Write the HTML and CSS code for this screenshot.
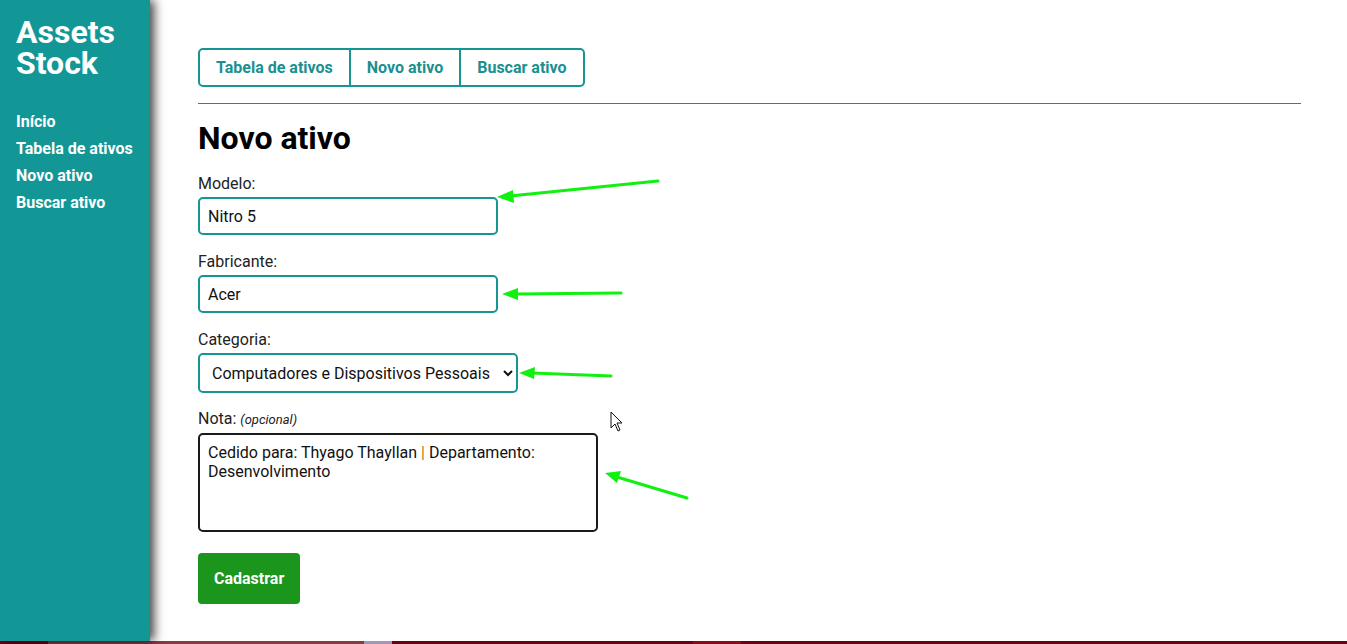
FILE: index.html
```html
<!DOCTYPE html>
<html>
<head>
    <title>Assets Stock</title>
    <link rel="stylesheet" href="styles.css">
</head>
<body>
    <div class="app">
        <aside class="sidebar">
            <h1>Assets Stock</h1>
            <nav class="side-links">
                <a href="#">Início</a>
                <a href="#">Tabela de ativos</a>
                <a href="#">Novo ativo</a>
                <a href="#">Buscar ativo</a>
            </nav>
        </aside>

        <main class="content">
            <div class="tabs">
                <a href="#" class="tab">Tabela de ativos</a>
                <a href="#" class="tab">Novo ativo</a>
                <a href="#" class="tab">Buscar ativo</a>
            </div>
            <hr class="divider">

            <h2 class="page-title">Novo ativo</h2>

            <form class="asset-form">
                <div class="field">
                    <label for="modelo">Modelo:</label>
                    <input type="text" id="modelo" class="text-input" value="Nitro 5">
                </div>
                <div class="field">
                    <label for="fabricante">Fabricante:</label>
                    <input type="text" id="fabricante" class="text-input" value="Acer">
                </div>
                <div class="field field-select">
                    <label for="categoria">Categoria:</label>
                    <select id="categoria" class="select-input">
                        <option>Computadores e Dispositivos Pessoais</option>
                        <option>Periféricos</option>
                        <option>Redes</option>
                    </select>
                </div>
                <div class="field">
                    <label for="nota">Nota: <em class="optional">(opcional)</em></label>
                    <div id="nota" class="note-box" contenteditable="true">Cedido para: Thyago Thayllan <span class="pipe">|</span> Departamento:<br>Desenvolvimento</div>
                </div>
                <button type="button" class="submit-button">Cadastrar</button>
            </form>
        </main>
    </div>

    <div class="taskbar">
        <span class="task task-active"></span>
        <span class="task task-icon"></span>
        <span class="task-gap"></span>
        <span class="task task-red"></span>
    </div>

    <!-- anotações do print -->
    <svg class="marks" width="1347" height="644" viewBox="0 0 1347 644">
        <g stroke="#12f012" stroke-width="3" stroke-linecap="round">
            <line x1="658" y1="181" x2="510" y2="196"/>
            <line x1="621" y1="293" x2="515" y2="294"/>
            <line x1="611" y1="376" x2="532" y2="373"/>
            <line x1="687" y1="498" x2="617" y2="477"/>
        </g>
        <g fill="#12f012">
            <polygon points="497,197 513,190 514,203"/>
            <polygon points="502,294 518,288 518,300"/>
            <polygon points="519,373 535,367 534,379"/>
            <polygon points="605,473 621,471 617,483"/>
        </g>
        <path d="M611 412 L611 428 L615 424 L618 431 L620 430 L617 423 L622 423 Z" fill="#fff" stroke="#111" stroke-width="1" stroke-linejoin="round"/>
    </svg>
</body>
</html>
```

FILE: styles.css
```css
body {
    margin: 0;
    font-family: Roboto, "Liberation Sans", Arial, sans-serif;
    background: #fff;
    color: #111;
    overflow: hidden;
}

.app {
    display: flex;
    height: 641px;
}

.sidebar {
    width: 150px;
    flex-shrink: 0;
    box-sizing: border-box;
    padding: 17px 0 0 16px;
    background: #139696;
    box-shadow: 4px 0 10px rgba(0, 0, 0, 0.75);
    position: relative;
    z-index: 1;
}

.sidebar h1 {
    margin: 0;
    width: 110px;
    font-size: 32px;
    line-height: 31px;
    font-weight: 700;
    color: #fff;
}

.side-links {
    display: flex;
    flex-direction: column;
    margin-top: 29px;
}

.side-links a {
    color: #fff;
    font-size: 16px;
    font-weight: 700;
    line-height: 27px;
    text-decoration: none;
}

.content {
    flex: 1;
    padding: 48px 46px 0 48px;
}

.tabs {
    display: inline-flex;
    border: 2px solid #179494;
    border-radius: 5px;
}

.tab {
    padding: 8px 16px;
    line-height: 19px;
    font-size: 16px;
    font-weight: 700;
    color: #1a9090;
    text-decoration: none;
}

.tab + .tab {
    border-left: 2px solid #179494;
}

.divider {
    margin: 16px 0 0;
    border: none;
    border-top: 1px solid #1a8c8c;
}

.page-title {
    margin: 16px 0 17px;
    font-size: 32px;
    line-height: 37px;
    font-weight: 700;
    color: #000;
}

.field {
    margin-bottom: 17px;
}

.field-select {
    margin-bottom: 16px;
}

.field label {
    display: block;
    margin-bottom: 4px;
    font-size: 16px;
    line-height: 19px;
    color: #222;
}

.optional {
    font-size: 13px;
    color: #222;
}

.text-input {
    box-sizing: border-box;
    width: 300px;
    height: 38px;
    padding: 0 8px;
    border: 2px solid #179494;
    border-radius: 5px;
    font-family: inherit;
    font-size: 16px;
    color: #111;
    outline: none;
}

.select-input {
    box-sizing: border-box;
    width: 320px;
    height: 40px;
    padding: 0 4px 0 8px;
    border: 2px solid #179494;
    border-radius: 5px;
    background: #fff;
    font-family: inherit;
    font-size: 16px;
    color: #111;
    outline: none;
}

.note-box {
    box-sizing: border-box;
    width: 400px;
    height: 99px;
    padding: 8px;
    border: 2px solid #1a1a1a;
    border-radius: 5px;
    font-size: 16px;
    line-height: 19px;
    color: #111;
    outline: none;
}

.pipe {
    color: #b8780a;
}

.submit-button {
    margin-top: 4px;
    height: 51px;
    padding: 0 16px;
    border: none;
    border-radius: 4px;
    background: #1c951c;
    color: #fff;
    font-family: inherit;
    font-size: 16px;
    font-weight: 700;
    cursor: pointer;
}

.taskbar {
    display: flex;
    height: 3px;
    background: #6c0010;
}

.task {
    display: block;
    height: 3px;
}

.task-active {
    margin-left: 48px;
    width: 316px;
    background: #8a3942;
}

.task-icon {
    width: 28px;
    background: #a594bc;
}

.task-gap {
    width: 301px;
}

.task-red {
    width: 48px;
    background: #8d0a16;
}

.marks {
    position: absolute;
    top: 0;
    left: 0;
    pointer-events: none;
}
```
